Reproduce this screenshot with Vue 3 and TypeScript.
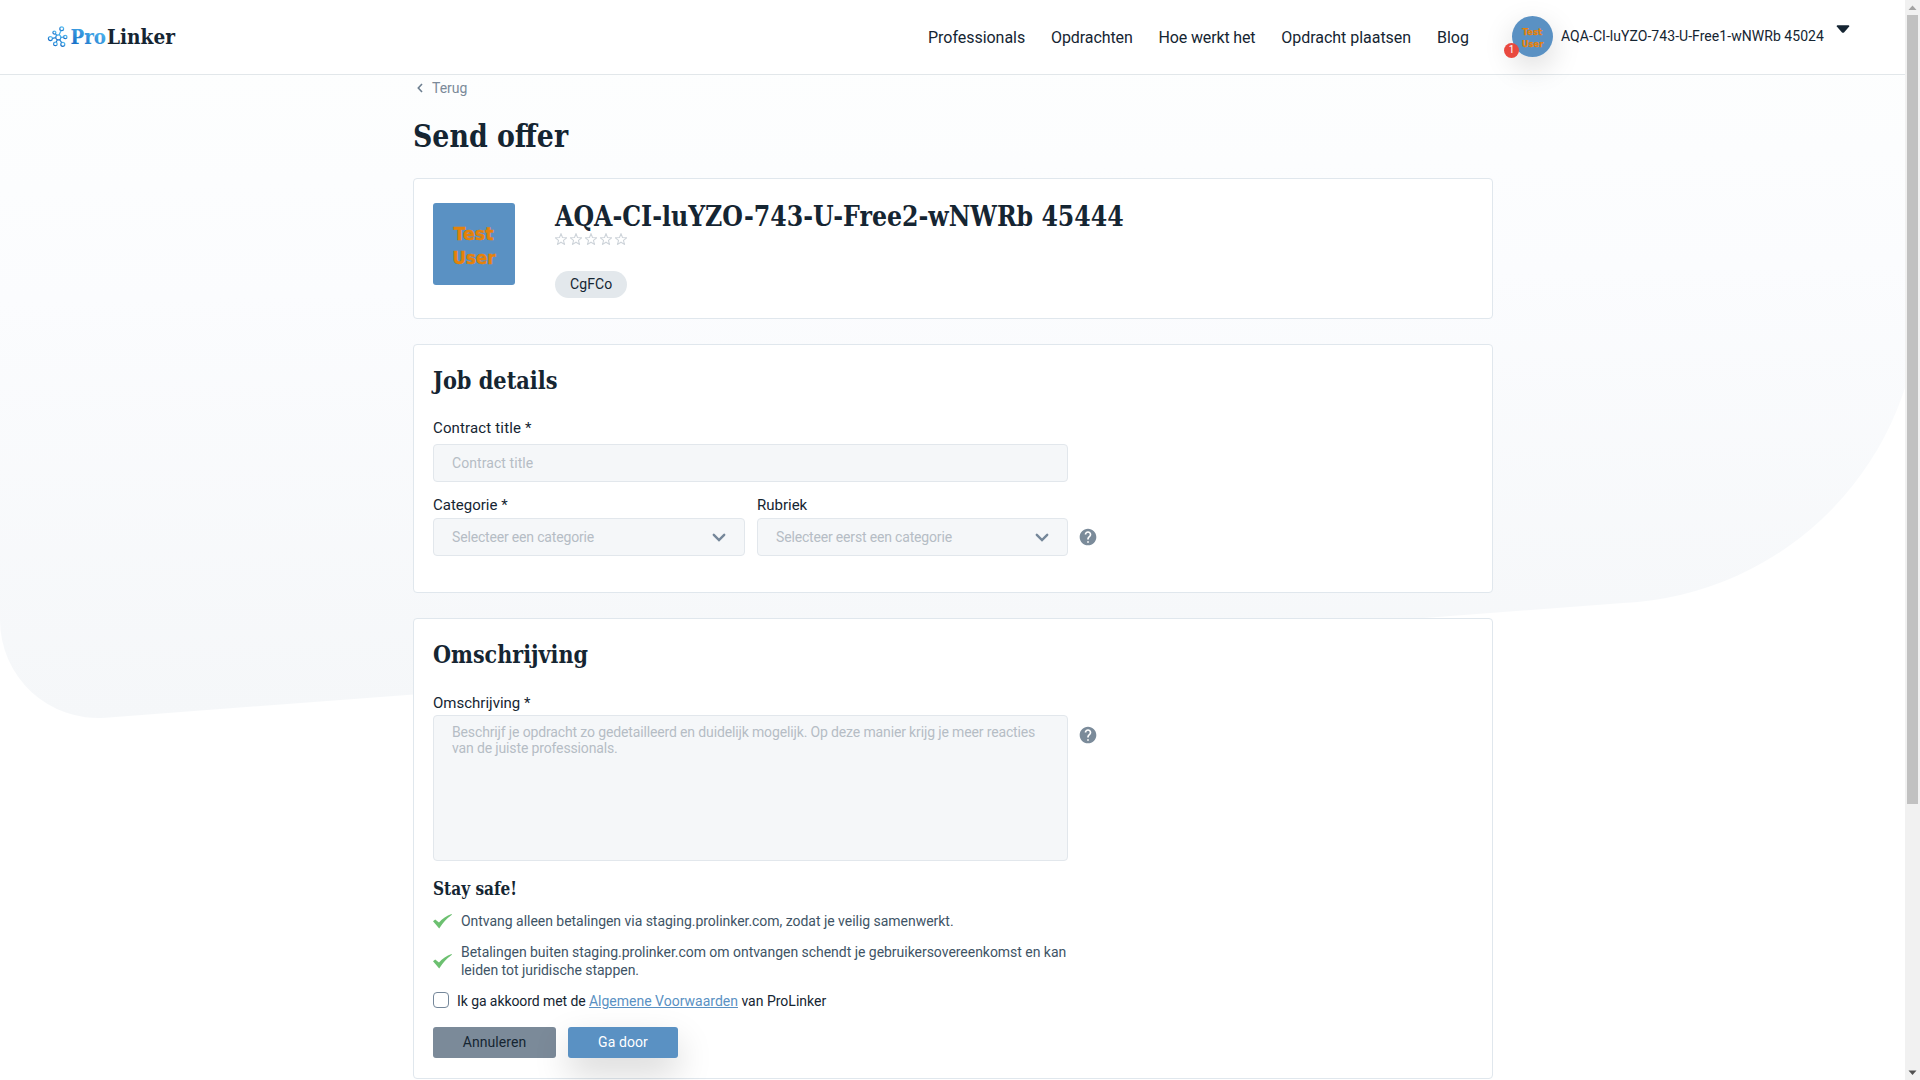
<script setup lang="ts">
interface NavItem {
  label: string
  spacing: number
}

const navItems: NavItem[] = [
  { label: 'Professionals', spacing: -0.03 },
  { label: 'Opdrachten', spacing: -0.1 },
  { label: 'Hoe werkt het', spacing: -0.15 },
  { label: 'Opdracht plaatsen', spacing: -0.03 },
  { label: 'Blog', spacing: 0 },
]
const safetyTips: string[] = [
  'Ontvang alleen betalingen via staging.prolinker.com, zodat je veilig samenwerkt.',
  'Betalingen buiten staging.prolinker.com om ontvangen schendt je gebruikersovereenkomst en kan leiden tot juridische stappen.',
]
const helpPath =
  'M12 2C6.48 2 2 6.48 2 12s4.48 10 10 10 10-4.48 10-10S17.52 2 12 2zm1 17h-2v-2h2v2zm2.07-7.75l-.9.92C13.45 12.9 13 13.5 13 15h-2v-.5c0-1.1.45-2.1 1.17-2.83l1.24-1.26c.37-.36.59-.86.59-1.41 0-1.1-.9-2-2-2s-2 .9-2 2H8c0-2.21 1.79-4 4-4s4 1.79 4 4c0 .88-.36 1.68-.93 2.25z'
</script>

<template>
  <div class="window">
    <div class="page">
      <svg class="backdrop" width="1905" height="1005" viewBox="0 75 1905 1005" aria-hidden="true">
        <defs>
          <linearGradient id="wash" x1="0" y1="0" x2="0.06" y2="1">
            <stop offset="0" stop-color="#fdfefe" />
            <stop offset="0.35" stop-color="#fbfcfe" />
            <stop offset="1" stop-color="#f5f7f9" />
          </linearGradient>
        </defs>
        <path d="M0 75H1920V295A311 311 0 0 1 1623 603L105.5 717.7A98 98 0 0 1 0 620Z" fill="url(#wash)" />
      </svg>

      <header class="header">
        <a class="logo">
          <svg width="150" height="34" viewBox="0 0 150 34">
            <defs>
              <linearGradient id="brand" x1="0" y1="1" x2="0.7" y2="0">
                <stop offset="0.1" stop-color="#1269c4" />
                <stop offset="1" stop-color="#55bdf3" />
              </linearGradient>
            </defs>
            <g fill="none" stroke="url(#brand)" stroke-width="1.2">
              <circle cx="10.3" cy="15.4" r="2.5" />
              <circle cx="13.7" cy="6.8" r="1.9" />
              <circle cx="6.4" cy="10.6" r="1.5" />
              <circle cx="2.4" cy="16.6" r="2" />
              <circle cx="7.4" cy="21.9" r="1.8" />
              <circle cx="14.8" cy="22.3" r="2" />
              <circle cx="17.3" cy="15" r="1.7" />
              <path d="M11.1 13l1.9-4.4M8.9 13.3L7.3 11.8M7.8 15.7l-3.4.6M9.4 17.8L8.1 20.2M11.6 17.6l2.1 3M12.8 15.3l2.8-.2" />
            </g>
            <text x="22.5" y="22" textLength="35.5" lengthAdjust="spacingAndGlyphs" class="wordmark" fill="url(#brand)">Pro</text>
            <text x="59" y="22" textLength="68" lengthAdjust="spacingAndGlyphs" class="wordmark" fill="#152532">Linker</text>
          </svg>
        </a>
        <nav class="nav">
          <a v-for="item in navItems" :key="item.label" :style="{ letterSpacing: item.spacing + 'px' }">{{ item.label }}</a>
        </nav>
        <div class="account">
          <div class="user-pic">
            <svg width="41" height="41" viewBox="0 0 82 82">
              <rect width="82" height="82" fill="#5a91c3" />
              <text class="pic-text" x="20.5" y="37" textLength="40" lengthAdjust="spacingAndGlyphs">Test</text>
              <text class="pic-text" x="19.5" y="61" textLength="43" lengthAdjust="spacingAndGlyphs">User</text>
            </svg>
            <span class="badge">1</span>
          </div>
          <span class="user-name">AQA-CI-luYZO-743-U-Free1-wNWRb 45024</span>
          <svg class="caret" width="14" height="9" viewBox="0 0 14 9"><path d="M1.4.2h11.2q1 .5.6 1.3L8 7.4q-1 .8-2 0L.8 1.5Q.4.7 1.4.2z" fill="#152532" /></svg>
        </div>
      </header>

      <main class="content">
        <a class="back">
          <svg width="6" height="10" viewBox="0 0 6 10"><path d="M5 1L1.3 5 5 9" fill="none" stroke="#6d7f90" stroke-width="1.6" /></svg>
          Terug
        </a>
        <h1 class="title"><span>Send offer</span></h1>

        <section class="card profile">
          <svg class="portrait" width="82" height="82" viewBox="0 0 82 82">
            <rect width="82" height="82" fill="#5a91c3" />
            <text class="pic-text" x="20.5" y="37" textLength="40" lengthAdjust="spacingAndGlyphs">Test</text>
            <text class="pic-text" x="19.5" y="61" textLength="43" lengthAdjust="spacingAndGlyphs">User</text>
          </svg>
          <div class="profile-info">
            <h2 class="name"><span>AQA-CI-luYZO-743-U-Free2-wNWRb 45444</span></h2>
            <div class="stars">
              <svg v-for="n in 5" :key="n" width="12" height="12" viewBox="0.4 0.2 11.2 11.2">
                <path d="M6 .9L7.4 4.4l3.8.3-2.9 2.4.9 3.7L6 8.8l-3.2 2 .9-3.7L.8 4.7l3.8-.3z" fill="none" stroke="#ced4da" stroke-width="1" />
              </svg>
            </div>
            <span class="tag">CgFCo</span>
          </div>
        </section>

        <section class="card job">
          <h3 class="section-title job-title"><span>Job details</span></h3>
          <label class="label wide">Contract title *</label>
          <div class="field first">Contract title</div>
          <div class="row">
            <div class="col">
              <label class="label tight">Categorie *</label>
              <div class="field">
                Selecteer een categorie
                <svg width="14" height="9" viewBox="0 0 14 9"><path d="M1.8 1.8L7 7l5.2-5.2" fill="none" stroke="#75879a" stroke-width="2.4" stroke-linecap="round" /></svg>
              </div>
            </div>
            <div class="col narrow">
              <label class="label tight">Rubriek</label>
              <div class="field">
                Selecteer eerst een categorie
                <svg width="14" height="9" viewBox="0 0 14 9"><path d="M1.8 1.8L7 7l5.2-5.2" fill="none" stroke="#75879a" stroke-width="2.4" stroke-linecap="round" /></svg>
              </div>
            </div>
            <svg class="help" width="20" height="20" viewBox="0 0 24 24"><path :d="helpPath" fill="#7b8b9a" /></svg>
          </div>
        </section>

        <section class="card description">
          <h3 class="section-title desc-title"><span>Omschrijving</span></h3>
          <label class="label tight desc-label">Omschrijving *</label>
          <div class="area-row">
            <div class="area">Beschrijf je opdracht zo gedetailleerd en duidelijk mogelijk. Op deze manier krijg je meer reacties van de juiste professionals.</div>
            <svg class="help" width="20" height="20" viewBox="0 0 24 24"><path :d="helpPath" fill="#7b8b9a" /></svg>
          </div>
          <h4 class="safe"><span>Stay safe!</span></h4>
          <ul class="tips">
            <li v-for="tip in safetyTips" :key="tip">
              <svg width="19" height="15" viewBox="0 0 19 15"><path d="M0 7.2L2.2 5.6 6 8.5Q11 2.6 18.6 0L18.9.8Q11.5 6 6.2 14.6Z" fill="#6cc070" /></svg>
              <span>{{ tip }}</span>
            </li>
          </ul>
          <div class="agree">
            <span class="checkbox"></span>
            <span><span class="lead">Ik ga akkoord met de </span><a>Algemene Voorwaarden</a> van ProLinker</span>
          </div>
          <div class="actions">
            <button class="cancel">Annuleren</button>
            <button class="submit">Ga door</button>
          </div>
        </section>
      </main>
    </div>
    <div class="scrollbar">
      <svg width="15" height="15" viewBox="0 0 15 15"><path d="M3.5 10L7.5 5.5l4 4.5z" fill="#a3a3a3" /></svg>
      <div class="thumb"></div>
      <svg width="15" height="15" viewBox="0 0 15 15"><path d="M3.5 5.5l4 4.5 4-4.5z" fill="#505050" /></svg>
    </div>
  </div>
</template>

<style>
body {
  margin: 0;
  overflow: hidden;
}
</style>

<style scoped>
* {
  box-sizing: border-box;
}
.window {
  display: flex;
  height: 1080px;
  overflow: hidden;
  background: #fff;
  color: #152532;
  font-family: Roboto, sans-serif;
  font-size: 14px;
}
.page {
  position: relative;
  width: 1905px;
  height: 1080px;
  overflow: hidden;
}
.backdrop {
  position: absolute;
  left: 0;
  top: 75px;
}
.header {
  position: relative;
  z-index: 1;
  display: flex;
  height: 75px;
  padding-left: 48px;
  background: #fff;
  border-bottom: 1px solid #e2e7ea;
}
.logo {
  width: 880px;
  padding-top: 22px;
}
.logo svg {
  display: block;
  overflow: visible;
}
.wordmark,
.title,
.name,
.section-title,
.safe {
  font-family: 'Roboto Slab', 'DejaVu Serif Condensed', 'DejaVu Serif', serif;
  font-weight: 700;
}
.title span,
.name span,
.section-title span,
.safe span {
  display: inline-block;
  transform-origin: 0 50%;
  white-space: nowrap;
}
.wordmark {
  font-size: 20.5px;
}
.nav {
  display: flex;
  gap: 25.9px;
  width: 584px;
  font-size: 16px;
  line-height: 75px;
  white-space: nowrap;
}
.account {
  display: flex;
  padding-top: 16px;
  white-space: nowrap;
}
.user-pic {
  position: relative;
  width: 41px;
  height: 41px;
  border-radius: 50%;
  box-shadow: 0 10px 30px rgba(0, 0, 0, 0.15);
}
.user-pic svg {
  display: block;
  border-radius: 50%;
}
.badge {
  position: absolute;
  left: -8px;
  top: 27px;
  width: 15px;
  height: 15px;
  border-radius: 50%;
  background: #e9493f;
  color: #fff;
  font-size: 10px;
  line-height: 14px;
  text-align: center;
}
.pic-text {
  font-family: 'DejaVu Sans', sans-serif;
  font-weight: 700;
  font-size: 17px;
  fill: #e58208;
  stroke: #e58208;
  stroke-width: 0.5px;
}
.user-name {
  margin-left: 8px;
  width: 275px;
  line-height: 40px;
  letter-spacing: 0.05px;
}
.caret {
  margin-top: 9px;
}
.content {
  position: relative;
  width: 1080px;
  margin-left: 413px;
}
.back {
  display: flex;
  align-items: center;
  gap: 9px;
  height: 25px;
  padding-left: 4px;
  color: #7b8a99;
}
.title {
  margin: 0;
  height: 78px;
  padding-top: 15px;
  font-size: 31.5px;
  line-height: 42px;
}
.title span {
  transform: scaleX(0.946);
}
.card {
  margin-bottom: 25px;
  padding: 0 20px;
  border: 1px solid #e0e7ed;
  border-radius: 4px;
  background: #fff;
}
.profile {
  display: flex;
  height: 141px;
  padding-left: 19px;
}
.portrait {
  margin-top: 24px;
  border-radius: 3px;
}
.profile-info {
  margin-left: 40px;
}
.name {
  margin: 18px 0 0;
  padding-top: 1px;
  height: 36px;
  font-size: 27.5px;
  line-height: 36px;
}
.name span {
  transform: scaleX(0.957);
}
.stars {
  display: flex;
  gap: 3px;
  height: 38px;
}
.tag {
  display: inline-block;
  width: 72px;
  height: 27px;
  padding-left: 15px;
  border-radius: 14px;
  background: #e3e8ec;
  line-height: 27px;
  letter-spacing: 0.12px;
}
.job {
  height: 249px;
  padding-left: 19px;
}
.section-title {
  margin: 0;
  font-size: 23.6px;
  line-height: 32px;
}
.job-title {
  padding-top: 20px;
  height: 73px;
}
.job-title span {
  transform: scaleX(0.985);
}
.label {
  display: block;
  height: 26px;
  font-size: 15px;
  line-height: 20px;
}
.label.wide {
  letter-spacing: 0.15px;
}
.label.tight {
  height: 18px;
  line-height: 10px;
}
.label.desc-label {
  line-height: 13px;
}
.field {
  display: flex;
  align-items: center;
  justify-content: space-between;
  height: 38px;
  padding: 0 18px;
  border: 1px solid #e2e7ec;
  border-radius: 4px;
  background: #f5f7f9;
  color: #b5bdc5;
  letter-spacing: -0.17px;
}
.field.first {
  width: 635px;
  margin-bottom: 18px;
  letter-spacing: 0.07px;
}
.row {
  display: flex;
  gap: 12px;
}
.col {
  width: 312px;
}
.col.narrow {
  width: 311px;
}
.row .help {
  margin: 27px 0 0 -2px;
}
.description {
  height: 461px;
  padding-left: 19px;
}
.desc-title {
  padding-top: 20px;
  height: 78px;
}
.desc-title span {
  transform: scaleX(0.975);
}
.area-row {
  display: flex;
}
.area {
  width: 635px;
  height: 146px;
  padding: 8px 18px;
  border: 1px solid #e2e7ec;
  border-radius: 4px;
  background: #f5f7f9;
  color: #b5bdc5;
  line-height: 16px;
  letter-spacing: -0.14px;
}
.area-row .help {
  margin: 10px 0 0 10px;
}
.safe {
  margin: 0;
  height: 49px;
  padding-top: 16px;
  font-size: 17.7px;
  line-height: 24px;
}
.safe span {
  transform: scaleX(0.965);
}
.tips {
  width: 640px;
  margin: 0;
  padding: 0;
  list-style: none;
  color: #405466;
  line-height: 18px;
  letter-spacing: -0.03px;
}
.tips li {
  display: flex;
  align-items: center;
  gap: 9px;
  padding: 2px 0 11px;
}
.tips svg {
  flex: none;
}
.agree {
  display: flex;
  height: 37px;
  padding-top: 1px;
  line-height: 20px;
}
.lead {
  letter-spacing: -0.08px;
}
.agree a {
  color: #5a91c3;
  text-decoration: underline;
}
.checkbox {
  width: 16px;
  height: 16px;
  margin: 1px 8px 0 0;
  border: 1px solid #75879a;
  border-radius: 4px;
  background: #fff;
}
.actions {
  display: flex;
  gap: 12px;
}
.actions button {
  height: 31px;
  padding: 0;
  border: 0;
  border-radius: 3px;
  font: 14px/31px Roboto, sans-serif;
  letter-spacing: 0.08px;
}
.cancel {
  width: 123px;
  background: #7b8a99;
  color: #152532;
}
.submit {
  width: 110px;
  background: #5a91c3;
  color: #fff;
  box-shadow: 0 15px 35px rgba(0, 0, 0, 0.17);
}
.scrollbar {
  width: 15px;
  height: 1080px;
  background: #f1f1f1;
}
.scrollbar svg {
  display: block;
}
.thumb {
  width: 11px;
  height: 789px;
  margin: 0 2px 261px;
  background: #c1c1c1;
}
</style>
